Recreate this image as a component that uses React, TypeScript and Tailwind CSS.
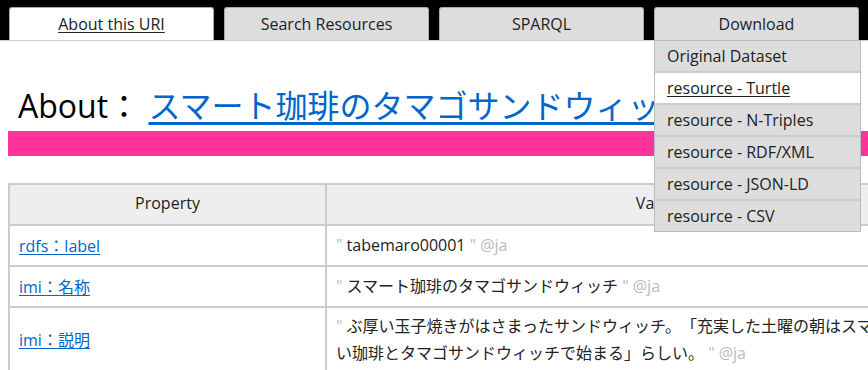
import React from 'react';

const tabs = ['About this URI', 'Search Resources', 'SPARQL', 'Download'];
const downloads = [
  'Original Dataset',
  'resource - Turtle',
  'resource - N-Triples',
  'resource - RDF/XML',
  'resource - JSON-LD',
  'resource - CSV',
];

const Literal = ({ children }: { children: React.ReactNode }) => (
  <>
    <span className="text-[#bbb]">&quot; </span>
    {children}
    <span className="text-[#bbb]"> &quot; </span>
    <span className="text-[#bbb]">@ja</span>
  </>
);

const rows: { prop: string; value: React.ReactNode }[] = [
  { prop: 'rdfs：label', value: <Literal>tabemaro00001</Literal> },
  { prop: 'imi：名称', value: <Literal>スマート珈琲のタマゴサンドウィッチ</Literal> },
  {
    prop: 'imi：説明',
    value: (
      <Literal>
        ぶ厚い玉子焼きがはさまったサンドウィッチ。「充実した土曜の朝はスマートで美味しい珈琲とタマゴサンドウィッチで始まる」らしい。
      </Literal>
    ),
  },
];

export default function App() {
  return (
    <div
      className="relative h-[370px] w-[868px] overflow-hidden bg-white text-[16px] text-[#222] [text-spacing-trim:space-all]"
      style={{ fontFamily: '"Open Sans", "Noto Sans CJK JP", sans-serif' }}>
      <nav className="flex h-[41px] gap-[10px] border-b border-[#ccc] bg-black px-[9px] pt-[7px]">
        {tabs.map((t, i) => (
          <div
            key={t}
            className={`relative flex h-[33px] w-[205px] shrink-0 items-center justify-center rounded-t-[3px] border border-b-0 border-[#aaa] ${
              i === 0 ? 'bg-white' : 'bg-[#ddd]'
            }`}>
            <span className={i === 0 ? 'underline underline-offset-2' : ''}>{t}</span>
            {i === 3 && (
              <ul className="absolute left-[-1px] top-[32px] z-10 w-[207px] border border-[#bbb] bg-[#ddd]">
                {downloads.map((d, j) => (
                  <li
                    key={d}
                    className={`flex h-[32px] items-center border-b-2 border-[#ccc] px-3 last:h-[30px] last:border-b-0 ${
                      j === 1 ? 'bg-white underline underline-offset-2' : ''
                    }`}>
                    {d}
                  </li>
                ))}
              </ul>
            )}
          </div>
        ))}
      </nav>

      <h1 className="mt-[41px] whitespace-nowrap pl-[18px] text-[32px] leading-[48px] text-black">
        About：{' '}
        <a href="#" className="text-[#0066cc] underline underline-offset-4">
          スマート珈琲のタマゴサンドウィッチ
        </a>
      </h1>
      <div className="ml-[8px] mt-[1px] h-[25px] w-[980px] bg-[#ff3399]" />

      <table className="ml-[8px] mt-[27px] w-[980px] border-collapse">
        <thead>
          <tr className="bg-[#eee]">
            <th className="h-[41px] w-[317px] border-2 border-[#ccc] pb-[3px] font-normal leading-[24px]">Property</th>
            <th className="border-2 border-[#ccc] pb-[3px] font-normal leading-[24px]">Value</th>
          </tr>
        </thead>
        <tbody>
          {rows.map((r) => (
            <tr key={r.prop}>
              <td className="h-[41px] border-2 border-[#ccc] px-[9px] py-0 leading-[24px]">
                <a href="#" className="text-[#0066cc] underline underline-offset-2">
                  {r.prop}
                </a>
              </td>
              <td className="border-2 border-[#ccc] px-[9px] py-[5px] leading-[27px]">{r.value}</td>
            </tr>
          ))}
        </tbody>
      </table>
    </div>
  );
}
